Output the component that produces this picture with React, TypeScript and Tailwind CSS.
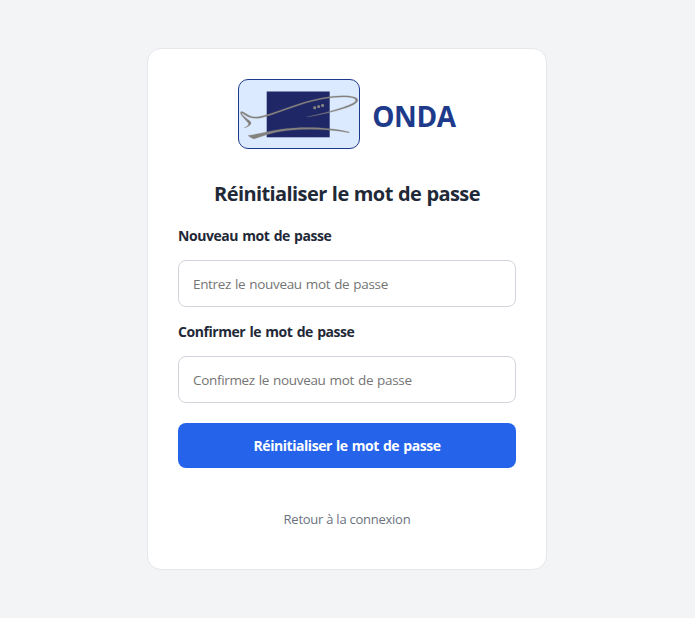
import React from "react";

function Logo() {
  return (
    <div className="h-[70px] w-[122px] overflow-hidden rounded-[10px] border border-[#1e3a8a] bg-[#dbeafe]">
      <svg viewBox="239 80 120 68" className="block h-full w-full" aria-hidden="true">
        <rect x="266.7" y="91.5" width="63" height="45.8" fill="#1f2766" />
        <g fill="#85837f">
          <path stroke="#85837f" strokeWidth=".25" d="M240.6 112C241.5 110.8 243.8 112.2 246.5 114C251 117 255 117.6 261 116.3C273 113.4 286 107.8 300 103.5C316 98.5 332 95.5 344 95.8C352 96 357.8 97.2 357.8 100.2C357.6 103.4 351 106.1 345.5 108C333 111.8 320 115.2 307 116.9C320 114.2 333 110.6 344 106.9C351 104.4 355.8 102.3 355.6 100.3C355.3 98 350 97 343 97.1C330 97.2 316 100 300 104.9C286 109.1 273 115.2 260.5 117.9C253.5 119.3 248 117.4 244.2 114.6C242.7 113.5 241.7 112.8 241.9 114C242.8 116.5 249.5 119.8 250.9 122.3C251.8 124.6 248.5 127 244 127.8C247 126.4 249 124.8 248.5 123.5C246.5 120.4 239.8 115.4 240.6 112Z" />
          <path stroke="#85837f" strokeWidth=".25" d="M248 135.6C260 133.7 269 131 281 129.2C305 126.2 331 127.5 349.3 132L349 132.7C331 129.4 309 128.2 287 130.5C273 132.2 264 135.7 254 138.9C251.5 138.3 249.6 137.2 248 135.6Z" />
          <rect x="313.2" y="106.3" width="2.9" height="2.9" rx="1" />
          <rect x="317.2" y="105.2" width="2.9" height="2.9" rx="1" />
          <rect x="321.1" y="104" width="2.9" height="2.9" rx="1" />
        </g>
      </svg>
    </div>
  );
}

function Field({ label, placeholder, id }: { label: string; placeholder: string; id: string }) {
  return (
    <div className="flex flex-col">
      <label
        htmlFor={id}
        className="mb-[14px] h-5 text-sm leading-5 font-bold tracking-[-0.44px] whitespace-nowrap text-[#1f2937] [word-spacing:1px]"
      >
        {label}
      </label>
      <input
        id={id}
        type="password"
        placeholder={placeholder}
        className="h-[47px] w-full rounded-lg border border-[#d1d5db] bg-white px-[14px] text-[13.5px] tracking-[-0.33px] text-gray-800 outline-none [word-spacing:0.8px] placeholder:text-[#757575]"
      />
    </div>
  );
}

export default function App() {
  return (
    <main className="flex h-screen items-center justify-center bg-[#f3f4f6] pr-px font-['Open_Sans','Noto_Sans',sans-serif]">
      <section className="h-[522px] w-[400px] rounded-[14px] border border-[#e5e7eb] bg-white p-[30px]">
        <header className="flex h-[70px] items-center justify-center gap-3">
          <Logo />
          <span className="pt-1 text-[28px] leading-9 font-bold tracking-[-0.35px] text-[#1e3a8a]">ONDA</span>
        </header>
        <h1 className="mt-[30px] h-[30px] text-center text-xl leading-[30px] font-bold tracking-[-0.59px] whitespace-nowrap text-[#1f2937] [word-spacing:0.6px]">
          Réinitialiser le mot de passe
        </h1>
        <form className="mt-[17px]" onSubmit={(e) => e.preventDefault()}>
          <div className="mb-5 flex flex-col gap-[15px]">
            <Field id="password" label="Nouveau mot de passe" placeholder="Entrez le nouveau mot de passe" />
            <Field id="confirm" label="Confirmer le mot de passe" placeholder="Confirmez le nouveau mot de passe" />
          </div>
          <button
            type="submit"
            className="h-[45px] w-full rounded-lg bg-[#2563eb] text-sm font-bold tracking-[-0.45px] text-white [word-spacing:0.9px]"
          >
            Réinitialiser le mot de passe
          </button>
        </form>
        <div className="mt-[41px] text-center text-[13px] leading-5">
          <a href="#" className="tracking-[-0.25px] text-[#6b7280]">Retour à la connexion</a>
        </div>
      </section>
    </main>
  );
}
